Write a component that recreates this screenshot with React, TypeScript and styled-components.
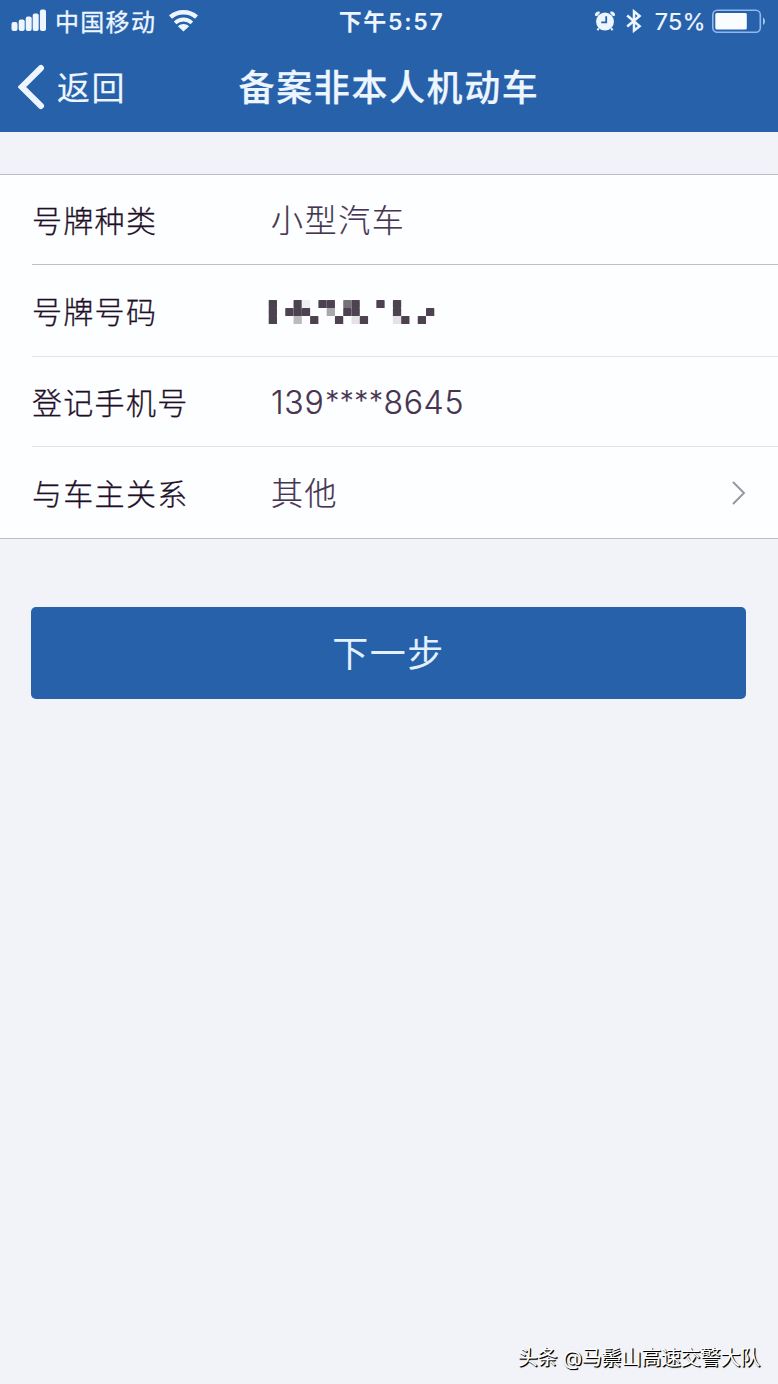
import React from 'react';
import styled, { createGlobalStyle } from 'styled-components';

const GlobalStyle = createGlobalStyle`
  * { box-sizing: border-box; }
  body {
    margin: 0;
    background: #f1f3f9;
    font-family: Inter, "Noto Sans CJK SC", sans-serif;
  }
`;

const Screen = styled.div`
  position: relative;
  display: flex;
  flex-direction: column;
  width: 778px;
  height: 1384px;
  overflow: hidden;
  background: #f1f3f9;
`;

const Header = styled.header`
  flex: none;
  height: 132px;
  background: #2661aa;
  color: #edf5ff;
`;

const StatusBar = styled.div`
  display: grid;
  grid-template-columns: 1fr auto 1fr;
  align-items: center;
  height: 42px;
  padding: 0 12px 0 11px;
`;

const StatusGroup = styled.div<{ $end?: boolean }>`
  display: flex;
  align-items: center;
  justify-content: ${(p) => (p.$end ? 'flex-end' : 'flex-start')};
`;

const Carrier = styled.span`
  margin: 0 13px 0 8px;
  padding-top: 3px;
  font-size: 24px;
  line-height: 39px;
  letter-spacing: 1.3px;
  -webkit-text-stroke: 0.3px currentColor;
`;

const Clock = styled.span`
  padding: 1px 0 0 6px;
  font-size: 23px;
  font-weight: 600;
  line-height: 40px;
  letter-spacing: 1.7px;
  white-space: nowrap;
`;

const Percent = styled.span`
  margin: 0 6px 0 13px;
  padding-top: 2px;
  font-size: 23.5px;
  line-height: 40px;
  letter-spacing: 0.3px;
  -webkit-text-stroke: 0.2px currentColor;
`;

const NavBar = styled.nav`
  display: grid;
  grid-template-columns: 1fr auto 1fr;
  align-items: center;
  height: 90px;
  padding: 0 18px;
`;

const BackButton = styled.button`
  display: flex;
  align-items: center;
  gap: 12px;
  padding: 0;
  border: 0;
  background: none;
  color: inherit;
  font: inherit;
  font-size: 33px;
  line-height: 48px;
  letter-spacing: 1.5px;
  -webkit-text-stroke: 0.15px currentColor;
`;

const BackText = styled.span`
  padding-top: 2px;
`;

const Title = styled.h1`
  margin: 0;
  padding-top: 1px;
  font-size: 36px;
  font-weight: 500;
  line-height: 54px;
  letter-spacing: 1.6px;
  -webkit-text-stroke: 0.25px currentColor;
`;

const Form = styled.section`
  margin-top: 42px;
  padding-left: 32px;
  border-top: 1px solid #b9bdc7;
  border-bottom: 1px solid #b9bdc7;
  background: #fdfeff;
`;

const Row = styled.div<{ $height: number; $line?: string }>`
  display: flex;
  align-items: center;
  height: ${(p) => p.$height}px;
  padding: 2px 32px 0 0;
  border-bottom: ${(p) => (p.$line ? `1px solid ${p.$line}` : '0')};
`;

const Label = styled.span`
  width: 238px;
  color: #1f1029;
  font-size: 30px;
  font-weight: 300;
  line-height: 44px;
  letter-spacing: 1.3px;
  -webkit-text-stroke: 0.3px currentColor;
`;

const Value = styled.span<{ $spacing?: number }>`
  flex: 1;
  padding-left: 1px;
  color: #463451;
  font-size: 32px;
  font-weight: 300;
  line-height: 46px;
  letter-spacing: ${(p) => p.$spacing ?? 1.6}px;
  -webkit-text-stroke: 0.2px currentColor;
`;

const Stars = styled.span`
  padding-left: 1px;
  font-size: 28px;
  line-height: 1;
  letter-spacing: 0.5px;
  vertical-align: 3px;
`;

const NextButton = styled.button`
  height: 92px;
  margin: 68px 32px 0 31px;
  padding: 3px 0 0;
  border: 0;
  border-radius: 5px;
  background: #2661aa;
  color: #e2f1ff;
  font: inherit;
  font-size: 36px;
  line-height: 89px;
  letter-spacing: 1.5px;
`;

const Watermark = styled.footer`
  margin: auto 18px 11px auto;
  color: #fff;
  font-size: 20px;
  line-height: 30px;
  letter-spacing: -0.2px;
  text-shadow: 1px 1px 1px #000, 1px 1px 0 #000;
`;

const SignalIcon = () => (
  <svg width="36" height="24" viewBox="0 0 36 24" fill="currentColor">
    <rect x="0.5" y="13" width="6" height="9" rx="2" />
    <rect x="7.7" y="10.5" width="6" height="11.5" rx="2" />
    <rect x="14.7" y="7.5" width="6" height="14.5" rx="2" />
    <rect x="21.7" y="4.5" width="6" height="17.5" rx="2" />
    <rect x="28.9" y="0.5" width="6.1" height="21.5" rx="2" />
  </svg>
);

const WifiIcon = () => (
  <svg width="29" height="22" viewBox="0 0 29 22" fill="none" stroke="currentColor">
    <path d="M1.5 7.2C8.5 0.6 20.5 0.6 27.5 7.2" strokeWidth="4.4" />
    <path d="M6.1 12.8C11 8.4 18 8.4 22.9 12.8" strokeWidth="3.8" />
    <path d="M8.9 16.2C12.3 13.4 16.7 13.4 20.1 16.2L14.5 21.6Z" fill="currentColor" stroke="none" />
  </svg>
);

const AlarmIcon = () => (
  <svg width="22" height="22" viewBox="0 0 22 22">
    <path d="M0.9 5.6C0.6 3 2.6 1 5.6 1.5L5.8 3.2L2.8 6.2ZM21.1 5.6C21.4 3 19.4 1 16.4 1.5L16.2 3.2L19.2 6.2Z" fill="currentColor" />
    <path d="M4.8 18.2L3.5 20.3M17.2 18.2L18.5 20.3" stroke="currentColor" strokeWidth="2" />
    <circle cx="11" cy="11.6" r="9" fill="currentColor" />
    <path d="M12.2 6.2V12.4H7.2" fill="none" stroke="#2661aa" strokeWidth="1.8" />
  </svg>
);

const BluetoothIcon = () => (
  <svg width="16" height="24" viewBox="0 0 16 24" fill="none" stroke="currentColor" strokeWidth="2.5">
    <path d="M1.2 6.5L13.6 17.1L8 21.6V2.4L13.6 7L1.2 17.5" />
  </svg>
);

const BatteryIcon = () => (
  <svg width="54" height="25" viewBox="0 0 54 25">
    <rect x="0.8" y="1.2" width="47.5" height="22" rx="4.5" fill="none" stroke="#8fb9ef" strokeWidth="1.6" />
    <rect x="3.3" y="4" width="31.5" height="16.4" rx="1.5" fill="#fafdff" />
    <path d="M51 8.5C53.6 10 53.6 14.5 51 16Z" fill="#a9c9f2" />
  </svg>
);

const BackIcon = () => (
  <svg width="27" height="46" viewBox="0 0 27 46" fill="none" stroke="currentColor" strokeWidth="6" strokeLinecap="round">
    <path d="M23 4L3.8 23L23 42" />
  </svg>
);

const ChevronIcon = () => (
  <svg width="14" height="26" viewBox="0 0 14 26" fill="none" stroke="#99949d" strokeWidth="1.9">
    <path d="M1 1L12 12L1 23" />
  </svg>
);

const DARK = '#4d424f';
const plateCells: [number, number, string][] = [
  [0, 0, DARK], [0, 1, DARK], [0, 2, DARK],
  [2, 1, DARK], [3, 0, DARK], [3, 1, DARK], [3, 2, '#bcb9bf'],
  [4, 0, '#eff0f3'], [4, 1, DARK], [5, 2, DARK],
  [6, 0, DARK], [7, 0, DARK], [7, 1, '#aaa7ad'], [8, 2, DARK],
  [9, 0, '#77717a'], [9, 1, DARK], [10, 0, DARK], [10, 1, DARK],
  [10, 2, '#e4e2e7'], [11, 2, DARK],
  [13, 0, DARK], [15, 0, DARK], [15, 1, DARK], [15, 2, '#e4e2e7'],
  [16, 2, DARK], [18, 2, DARK], [19, 1, DARK],
];

const PlateDrawing = styled.svg`
  margin-left: -2px;
`;

const MaskedPlate = () => (
  <PlateDrawing width="168" height="26" viewBox="0 0 168 26">
    {plateCells.map(([col, row, fill]) => (
      <rect key={`${col}-${row}`} x={col * 8.28 + 0.7} y={row * 8 + 1} width="8.3" height="8.1" rx="0.7" fill={fill} />
    ))}
  </PlateDrawing>
);

const IconPair = styled.span`
  display: flex;
  align-items: center;
  gap: 10px;
  margin-right: -1px;
  padding-right: 1px;
`;

export default function App() {
  return (
    <Screen>
      <GlobalStyle />
      <Header>
        <StatusBar>
          <StatusGroup>
            <SignalIcon />
            <Carrier>中国移动</Carrier>
            <WifiIcon />
          </StatusGroup>
          <Clock>下午5:57</Clock>
          <StatusGroup $end>
            <IconPair>
              <AlarmIcon />
              <BluetoothIcon />
            </IconPair>
            <Percent>75%</Percent>
            <BatteryIcon />
          </StatusGroup>
        </StatusBar>
        <NavBar>
          <BackButton>
            <BackIcon />
            <BackText>返回</BackText>
          </BackButton>
          <Title>备案非本人机动车</Title>
        </NavBar>
      </Header>
      <Form>
        <Row $height={90} $line="#bdc1c9">
          <Label>号牌种类</Label>
          <Value>小型汽车</Value>
        </Row>
        <Row $height={92} $line="#e0e4eb">
          <Label>号牌号码</Label>
          <MaskedPlate />
        </Row>
        <Row $height={90} $line="#e0e4eb">
          <Label>登记手机号</Label>
          <Value $spacing={0.7}>139<Stars>****</Stars>8645</Value>
        </Row>
        <Row $height={91}>
          <Label>与车主关系</Label>
          <Value>其他</Value>
          <ChevronIcon />
        </Row>
      </Form>
      <NextButton>下一步</NextButton>
      <Watermark>头条 @马鬃山高速交警大队</Watermark>
    </Screen>
  );
}
